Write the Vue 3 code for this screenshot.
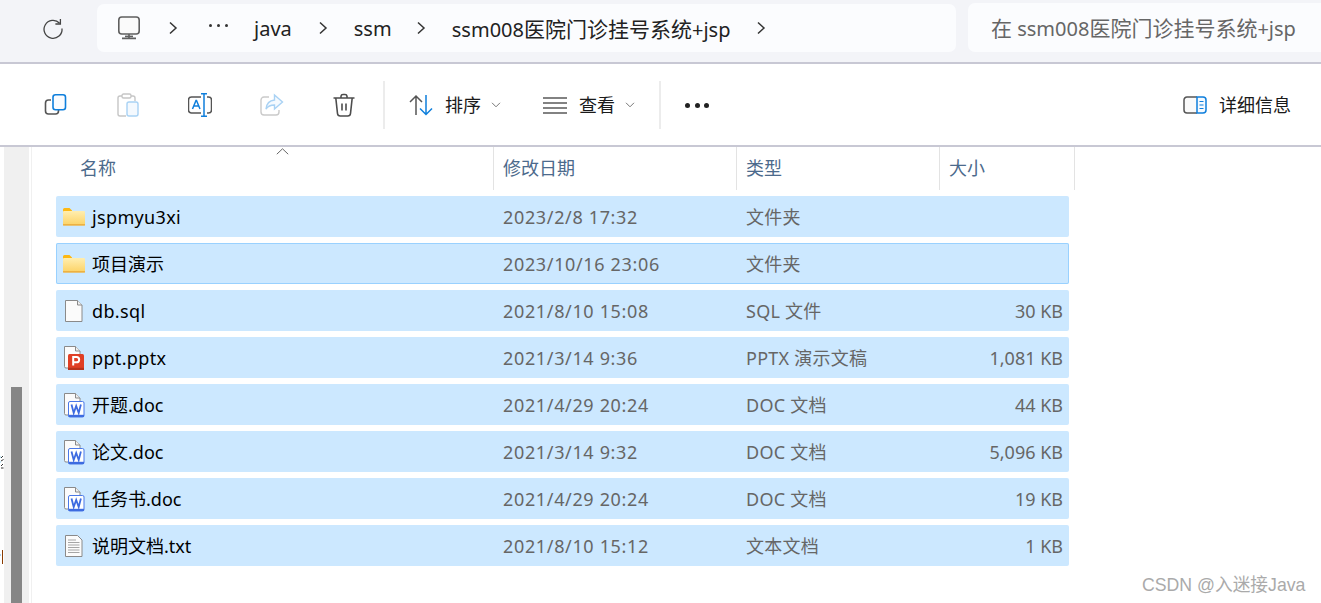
<script setup>
const files = [
  { name: 'jspmyu3xi', date: '2023/2/8 17:32', type: '文件夹', size: '', icon: 'folder', latin: true },
  { name: '项目演示', date: '2023/10/16 23:06', type: '文件夹', size: '', icon: 'folder', focused: true },
  { name: 'db.sql', date: '2021/8/10 15:08', type: 'SQL 文件', size: '30 KB', icon: 'file', latin: true },
  { name: 'ppt.pptx', date: '2021/3/14 9:36', type: 'PPTX 演示文稿', size: '1,081 KB', icon: 'ppt', latin: true },
  { name: '开题.doc', date: '2021/4/29 20:24', type: 'DOC 文档', size: '44 KB', icon: 'word' },
  { name: '论文.doc', date: '2021/3/14 9:32', type: 'DOC 文档', size: '5,096 KB', icon: 'word' },
  { name: '任务书.doc', date: '2021/4/29 20:24', type: 'DOC 文档', size: '19 KB', icon: 'word' },
  { name: '说明文档.txt', date: '2021/8/10 15:12', type: '文本文档', size: '1 KB', icon: 'txt' }
]
</script>

<template>
  <div class="explorer">
    <header class="topbar">
      <svg class="refresh" width="24" height="24" viewBox="0 0 24 24" fill="none" stroke="#444" stroke-width="1.3">
        <path d="M18.600 7.200A9 9 0 1 0 21 12.500" />
        <path d="M19.400 3v5h-5" />
      </svg>
      <nav class="address">
        <svg width="24" height="24" viewBox="0 0 24 24" fill="none" stroke="#5f5f5f" stroke-width="1.6">
          <rect x="1.800" y="1" width="20.400" height="17" rx="3" fill="#fafafa" />
          <path d="M12 18v4M5 22.400h14" />
          <path d="M8 20.400h8" />
        </svg>
        <svg class="chev first" width="12" height="14" viewBox="0 0 12 14" fill="none" stroke="#333" stroke-width="1.5"><path d="M3 1.500 9 7l-6 5.500" /></svg>
        <span class="dots-small"><i></i><i></i><i></i></span>
        <span class="crumb">java</span>
        <svg class="chev" width="12" height="14" viewBox="0 0 12 14" fill="none" stroke="#333" stroke-width="1.5"><path d="M3 1.500 9 7l-6 5.500" /></svg>
        <span class="crumb narrow">ssm</span>
        <svg class="chev" width="12" height="14" viewBox="0 0 12 14" fill="none" stroke="#333" stroke-width="1.5"><path d="M3 1.500 9 7l-6 5.500" /></svg>
        <span class="crumb">ssm008<span class="cjk">医院门诊挂号系统</span>+jsp</span>
        <svg class="chev" width="12" height="14" viewBox="0 0 12 14" fill="none" stroke="#333" stroke-width="1.5"><path d="M3 1.500 9 7l-6 5.500" /></svg>
      </nav>
      <div class="search"><span class="cjk">在</span> ssm008<span class="cjk">医院门诊挂号系统</span>+jsp</div>
    </header>

    <section class="toolbar">
      <svg class="tool" width="24" height="24" viewBox="0 0 24 24" fill="none" stroke-width="1.6">
        <path d="M7 7H4.500A3 3 0 0 0 1.500 10v8a3 3 0 0 0 3 3h7a3 3 0 0 0 3-3v-1.500" stroke="#555" />
        <rect x="9" y="1.800" width="12.500" height="15" rx="2.500" fill="#fafcff" stroke="#0f7fdc" />
      </svg>
      <svg class="tool" width="24" height="24" viewBox="0 0 24 24" fill="none" stroke-width="1.4">
        <path d="M6 3H4a2 2 0 0 0-2 2v16a2 2 0 0 0 2 2h6M15 3h2a2 2 0 0 1 2 2v3" stroke="#c6c6c6" />
        <rect x="6" y="1" width="9" height="4" rx="1.500" stroke="#c6c6c6" />
        <rect x="11" y="9" width="11" height="14" rx="2" fill="#f4f9fe" stroke="#a9d2f4" />
      </svg>
      <svg class="tool" width="24" height="24" viewBox="0 0 24 24" fill="none" stroke-width="1.5">
        <path d="M13 4H3.500A3 3 0 0 0 .5 7v10a3 3 0 0 0 3 3H13M19 4h1.500a3 3 0 0 1 3 3v10a3 3 0 0 1-3 3H19" stroke="#555" />
        <path d="M4.500 16 8 7.500h.5L12 16M5.800 13h5" stroke="#0f7fdc" />
        <path d="M13 .8h6M16 .8v22.400M13 23.200h6" stroke="#0f7fdc" />
      </svg>
      <svg class="tool" width="24" height="24" viewBox="0 0 24 24" fill="none" stroke-width="1.4">
        <path d="M9 4H4a3 3 0 0 0-3 3v12a3 3 0 0 0 3 3h12a3 3 0 0 0 3-3v-2" stroke="#cacaca" />
        <path d="M14.500 2 22.500 9l-8 7v-4c-4 0-6.500 1-8.500 4 .5-5 3.500-8.500 8.500-9z" fill="#f5faff" stroke="#a9d2f4" />
      </svg>
      <svg class="tool" width="24" height="24" viewBox="0 0 24 24" fill="none" stroke="#4d4d4d" stroke-width="1.6">
        <path d="M1.500 5h21M9 5V3.200A2 2 0 0 1 11 1.500h2a2 2 0 0 1 2 1.700V5" />
        <path d="M3.800 5 5.500 20.500A2.800 2.800 0 0 0 8.300 23h7.400a2.800 2.800 0 0 0 2.800-2.500L20.200 5" />
        <path d="M10 10.500v7M14 10.500v7" />
      </svg>
      <span class="sep first-sep"></span>
      <div class="tool-group sort-group">
        <svg width="24" height="24" viewBox="0 0 24 24" fill="none" stroke-width="1.5">
          <path d="M7 22V3M1 9l6-6 6 6" stroke="#555" />
          <path d="M17 2v19.500M11 15.500l6 6 6-6" stroke="#0f7fdc" />
        </svg>
        <span class="tool-label">排序</span>
        <svg class="caret" width="10" height="6" viewBox="0 0 10 6" fill="none" stroke="#777"><path d="M1 .8 5 4.800 9 .8" /></svg>
      </div>
      <div class="tool-group view-group">
        <svg width="24" height="24" viewBox="0 0 24 24" fill="none" stroke="#5a5a5a" stroke-width="1.400">
          <path d="M0 5h24M0 10h24M0 15h24M0 20h24" />
        </svg>
        <span class="tool-label">查看</span>
        <svg class="caret" width="10" height="6" viewBox="0 0 10 6" fill="none" stroke="#777"><path d="M1 .8 5 4.800 9 .8" /></svg>
      </div>
      <span class="sep second-sep"></span>
      <span class="dots-big"><i></i><i></i><i></i></span>
      <div class="tool-group details">
        <svg width="24" height="18" viewBox="0 0 24 18" fill="none" stroke-width="1.500">
          <path d="M14 1H4a3 3 0 0 0-3 3v10a3 3 0 0 0 3 3h10" fill="#fafafa" stroke="#555" />
          <path d="M14 1h6a3 3 0 0 1 3 3v10a3 3 0 0 1-3 3h-6z" fill="#f5faff" stroke="#0f7fdc" />
          <path d="M16.500 5.500h4M16.500 9h4M16.500 12.500h4" stroke="#0f7fdc" stroke-width="1.200" />
        </svg>
        <span class="tool-label">详细信息</span>
      </div>
    </section>

    <main class="pane">
      <aside class="side">
        <svg class="clip-marks" width="4" height="116" viewBox="0 0 4 116" fill="none">
          <path d="M3 1 1 3M3.500 4.500 1 6M3 9 1 11M3.500 13H1" stroke="#333" />
          <path d="M0 2h1M0 7h1" stroke="#8fd0ea" />
          <path d="M2.500 95v14" stroke="#8a3b00" />
          <path d="M0 100h1" stroke="#5aa0d8" />
        </svg>
        <span class="thumb"></span>
      </aside>
      <div class="content">
        <div class="columns">
          <div class="col col-name">名称<svg class="sort-caret" width="13" height="7" viewBox="0 0 13 7" fill="none" stroke="#666"><path d="M.8 6.200 6.500.8l5.700 5.400" /></svg></div>
          <div class="col">修改日期</div>
          <div class="col">类型</div>
          <div class="col">大小</div>
        </div>
        <div class="rows">
          <div v-for="f in files" :key="f.name" class="row" :class="{ focused: f.focused }">
            <svg v-if="f.icon === 'folder'" width="24" height="25" viewBox="0 0 24 25">
              <defs>
                <linearGradient id="folderFill" x1="0" y1="0" x2="0" y2="1">
                  <stop offset="0" stop-color="#ffeeb0" />
                  <stop offset="1" stop-color="#fcd264" />
                </linearGradient>
              </defs>
              <path d="M1 5.500A1.500 1.500 0 0 1 2.500 4h5L10 6.500v2H1z" fill="#fdb813" />
              <rect x="1" y="7" width="22" height="14.500" rx="1" fill="url(#folderFill)" />
              <rect x="1" y="20.200" width="22" height="1.300" fill="#e9a93a" />
            </svg>
            <svg v-else-if="f.icon === 'file'" width="24" height="25" viewBox="0 0 24 25" fill="#fbfbfb" stroke="#8a8a8a" stroke-width="1">
              <path d="M3.500 2.500h12l4.500 4.500v16.500H3.500z" />
              <path d="M15.500 2.500V7H20" fill="#efefef" />
            </svg>
            <svg v-else-if="f.icon === 'ppt'" width="24" height="26" viewBox="0 0 24 26">
              <path d="M2.500 1.500h11l4.500 4.500v17H4a1.500 1.500 0 0 1-1.500-1.500z" fill="#fbfbfb" stroke="#8a8a8a" />
              <path d="M13.500 1.500V6H18" fill="#efefef" stroke="#8a8a8a" />
              <rect x="6" y="9" width="16" height="16" rx="1.500" fill="#e03f25" />
              <rect x="6" y="22.800" width="16" height="2.200" fill="#b8321c" />
              <path d="M11.200 20.500v-8.500h3.300a2.600 2.600 0 0 1 0 5.300h-3.300" fill="none" stroke="#fff" stroke-width="2" />
            </svg>
            <svg v-else-if="f.icon === 'word'" width="24" height="26" viewBox="0 0 24 26">
              <path d="M2.500 1.500h11l4.500 4.500v17H4a1.500 1.500 0 0 1-1.500-1.500z" fill="#fbfbfb" stroke="#8a8a8a" />
              <path d="M13.500 1.500V6H18" fill="#efefef" stroke="#8a8a8a" />
              <rect x="6.500" y="9.500" width="15.500" height="15.500" rx="1.500" fill="#fff" stroke="#4a78e8" />
              <rect x="6.500" y="22.800" width="15.500" height="2.200" fill="#3d6be0" />
              <path d="M9.500 12.500 11.700 21l2.500-7 2.500 7 2.200-8.500" fill="none" stroke="#3d6be0" stroke-width="1.800" />
            </svg>
            <svg v-else width="24" height="25" viewBox="0 0 24 25" fill="#fbfbfb" stroke="#8a8a8a" stroke-width="1">
              <path d="M3.500 2.500h12l4.500 4.500v16.500H3.500z" />
              <path d="M6 7h8M6 9.500h11.500M6 12h11.500M6 14.500h11.500M6 17h11.500M6 19.500h11.500" stroke="#a5a5a5" />
            </svg>
            <span class="cell-name" :class="{ latin: f.latin }">{{ f.name }}</span>
            <span class="cell cell-date">{{ f.date }}</span>
            <span class="cell cell-type">{{ f.type }}</span>
            <span class="cell cell-size">{{ f.size }}</span>
          </div>
        </div>
      </div>
    </main>
    <div class="watermark">CSDN @入迷接Java</div>
  </div>
</template>

<style>
html,
body {
  margin: 0;
  background: #fff;
}
</style>

<style scoped>
.explorer {
  position: relative;
  width: 1321px;
  height: 603px;
  overflow: hidden;
  display: flex;
  flex-direction: column;
  background: #fff;
  font-family: "Noto Sans", "Noto Sans CJK SC", sans-serif;
  font-size: 18px;
  color: #1a1a1a;
}

.topbar {
  flex: none;
  height: 62px;
  display: flex;
  align-items: flex-start;
  background: #f3f4f8;
  border-bottom: 2px solid #c8c8d4;
}

.refresh {
  flex: none;
  margin: 16px 0 0 41px;
}

.address {
  flex: none;
  width: 839px;
  height: 48px;
  margin: 4px 0 0 32px;
  padding-left: 20px;
  display: flex;
  align-items: center;
  background: #fbfcfe;
  border-radius: 7px;
  font-size: 20px;
}

.chev {
  flex: none;
  margin: 0 25px;
}

.chev.first {
  margin: 0 30px 0 26px;
}

.crumb {
  color: #222;
  white-space: nowrap;
}

.narrow {
  width: 36px;
}

.cjk {
  font-size: 21px;
}

.dots-small {
  flex: none;
  display: flex;
  gap: 5px;
  width: 19px;
  margin: -6px 26px 0 0;
}

.dots-small i {
  width: 3px;
  height: 3px;
  border-radius: 50%;
  background: #333;
}

.search {
  flex: none;
  width: 330px;
  height: 49px;
  margin: 3px 0 0 12px;
  padding-left: 23px;
  line-height: 51px;
  background: #fbfcfe;
  border-radius: 7px 0 0 7px;
  font-size: 20px;
  color: #666;
  white-space: nowrap;
  overflow: hidden;
}

.toolbar {
  flex: none;
  height: 81px;
  display: flex;
  align-items: center;
  padding-left: 44px;
  background: #fff;
  border-bottom: 2px solid #c8c8d4;
}

.tool {
  flex: none;
  margin-right: 48px;
}

.sep {
  flex: none;
  width: 2px;
  height: 48px;
  background: #ececec;
}

.first-sep {
  margin-left: -21px;
}

.tool-group {
  flex: none;
  display: flex;
  align-items: center;
}

.tool-label {
  margin: -1px 0 0 12px;
  white-space: nowrap;
  color: #1a1a1a;
}

.caret {
  margin-left: 10px;
}

.sort-group {
  margin-left: 24px;
}

.view-group {
  margin-left: 42px;
}

.second-sep {
  margin-left: 24px;
}

.dots-big {
  display: flex;
  gap: 4.500px;
  margin: 1px 0 0 24px;
}

.dots-big i {
  width: 5px;
  height: 5px;
  border-radius: 50%;
  background: #222;
}

.details {
  margin-left: auto;
  margin-right: 30px;
}

.pane {
  flex: 1;
  min-height: 0;
  display: flex;
}

.side {
  position: relative;
  flex: none;
  width: 25px;
  margin-left: 4px;
  background: #f0f0f0;
}

.thumb {
  position: absolute;
  left: 7px;
  top: 240px;
  bottom: 0;
  width: 11px;
  background: #868686;
}

.clip-marks {
  position: absolute;
  left: -4px;
  top: 308px;
}

.content {
  flex: 1;
  min-width: 0;
  margin-left: 2px;
  border-left: 1px solid #f0f0f0;
}

.columns {
  display: grid;
  grid-template-columns: 462px 243px 203px 135px;
  height: 40px;
}

.col {
  position: relative;
  box-sizing: border-box;
  padding-left: 9px;
  line-height: 43px;
  color: #4c6a8c;
  border-right: 1px solid #e3e3e3;
}

.col-name {
  padding-left: 48px;
}

.sort-caret {
  position: absolute;
  left: 244px;
  top: 1px;
}

.rows {
  display: flex;
  flex-direction: column;
  gap: 6px;
  width: 1013px;
  margin: 9px 0 0 24px;
}

.row {
  box-sizing: border-box;
  height: 41px;
  padding: 0 6px;
  display: grid;
  grid-template-columns: 30px 411px 243px 202px 115px;
  align-items: center;
  background: #cce8ff;
  border-radius: 2px;
  color: #666;
}

.row.focused {
  box-shadow: inset 0 0 0 1px #99d1ff;
}

.row svg {
  align-self: start;
  margin-top: 8px;
  overflow: visible;
}

.cell-name {
  margin-top: -1px;
  color: #000;
  white-space: nowrap;
}

.cell-name.latin {
  margin-top: 0;
  letter-spacing: 0.35px;
}

.cell {
  white-space: nowrap;
}

.cell-date {
  letter-spacing: 0.65px;
}

.cell-type {
  margin-top: -1px;
  letter-spacing: 0.25px;
}

.cell-size {
  text-align: right;
}

.watermark {
  position: absolute;
  left: 1142px;
  top: 573px;
  font-size: 17.700px;
  line-height: 24px;
  color: #aaa;
  font-family: "Liberation Sans", "Noto Sans CJK SC", sans-serif;
  white-space: nowrap;
}
</style>
